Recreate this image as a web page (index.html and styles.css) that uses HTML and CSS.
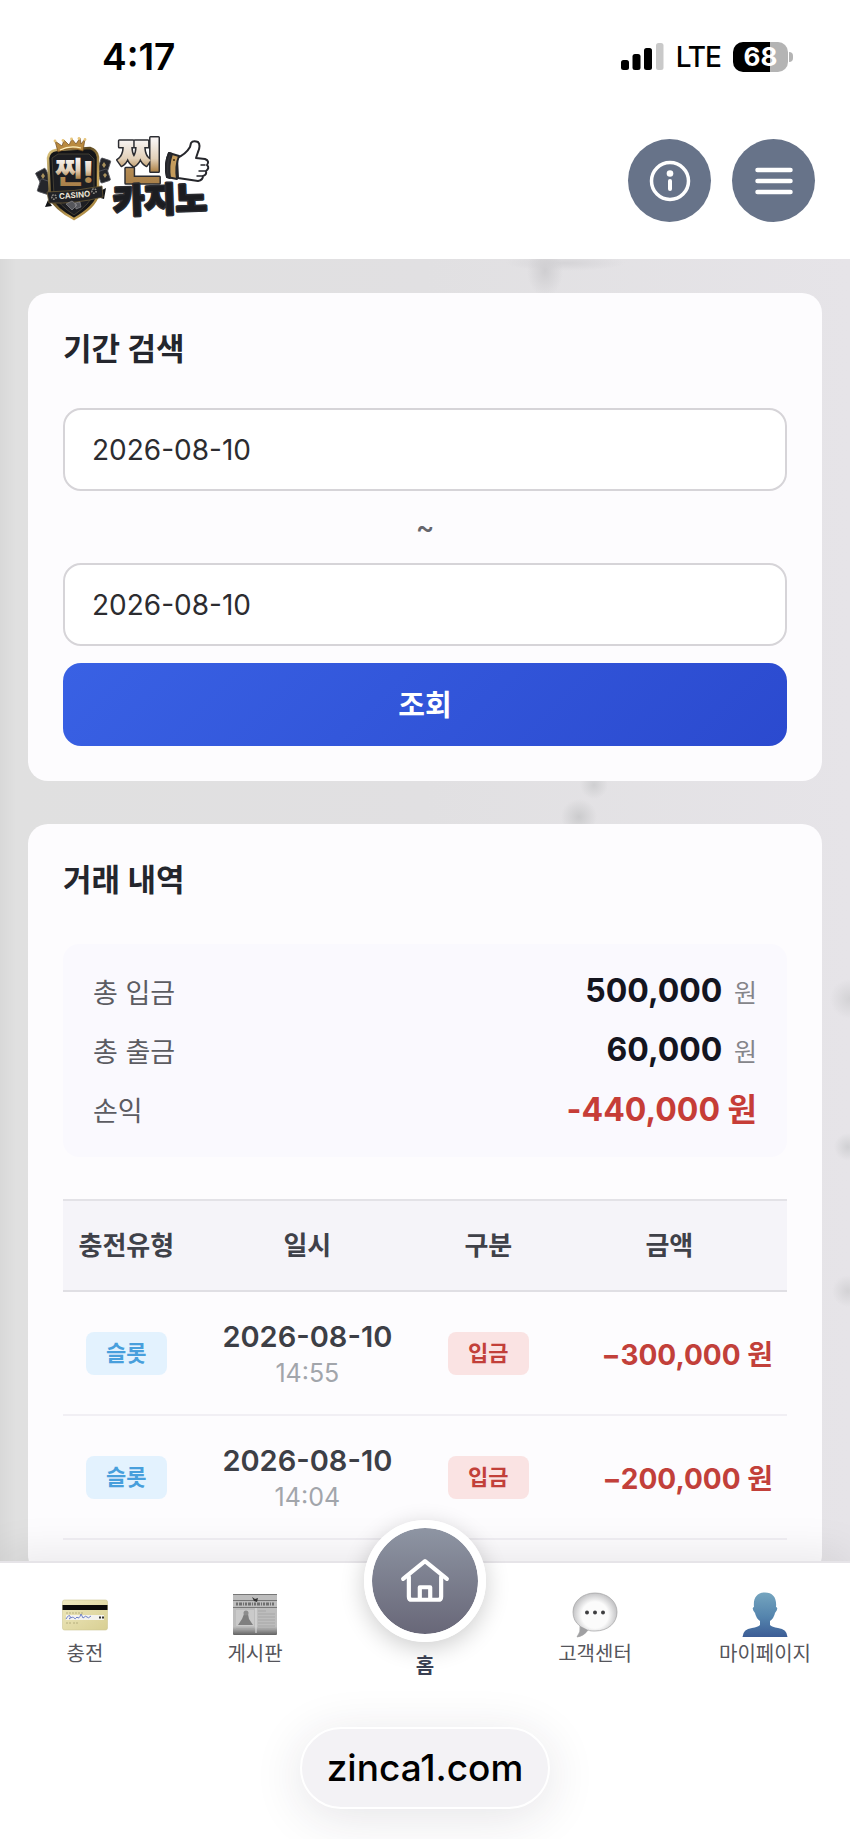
FILE: index.html
```html
<!DOCTYPE html>
<html lang="ko">
<head>
    <meta charset="UTF-8">
    <meta name="viewport" content="width=device-width, initial-scale=1.0">
    <title>찐카지노</title>
    <link rel="stylesheet" href="styles.css">
</head>
<body>

<div class="statusbar">
    <div class="clock">4:17</div>
    <div class="status-right">
        <svg class="signal" viewBox="0 0 43 28" aria-hidden="true">
            <rect x="0" y="17" width="8" height="10" rx="2.5"/>
            <rect x="11.500" y="11" width="8" height="16" rx="2.5"/>
            <rect x="23" y="5" width="8" height="22" rx="2.5"/>
            <rect class="off" x="35" y="0" width="7.500" height="27" rx="2.5"/>
        </svg>
        <span class="network">LTE</span>
        <div class="battery">
            <span class="level">68</span>
            <span class="nub"></span>
        </div>
    </div>
</div>

<header class="header">
    <a class="logo" href="#" aria-label="찐카지노">
        <svg viewBox="0 0 176 88">
            <defs>
                <linearGradient id="gold" x1="0" y1="0" x2="0" y2="1">
                    <stop offset="0.15" stop-color="#f7f2f0"/>
                    <stop offset="0.45" stop-color="#e2d0b8"/>
                    <stop offset="0.65" stop-color="#b38a52"/>
                    <stop offset="1" stop-color="#a47b45"/>
                </linearGradient>
                <linearGradient id="rim" x1="0" y1="0" x2="1" y2="1">
                    <stop offset="0" stop-color="#e8cf86"/>
                    <stop offset="0.4" stop-color="#57451f"/>
                    <stop offset="0.7" stop-color="#c9a65a"/>
                    <stop offset="1" stop-color="#8a6a2c"/>
                </linearGradient>
            </defs>
            <!-- playing cards behind the shield -->
            <g fill="#25262b" stroke="#55565c" stroke-width="0.8">
                <rect x="2" y="33" width="11" height="15" rx="1" transform="rotate(-28 7 40)"/>
                <rect x="3" y="43" width="11" height="13" rx="1" transform="rotate(18 8 49)"/>
                <rect x="63" y="22" width="10" height="15" rx="1" transform="rotate(18 68 29)"/>
                <rect x="63" y="33" width="10" height="12" rx="1" transform="rotate(-18 68 39)"/>
            </g>
            <g fill="#a8905c">
                <path d="M7 36l2 3-2 3-2-3zM68 25l2 3-2 3-2-3zM69 36l2 2-2 3-2-3z"/>
            </g>
            <!-- shield -->
            <path d="M12 21Q13 14 20 13L54 11Q61 13 62 20L62 58Q59 70 38 82Q19 72 14 60Z" fill="#141518" stroke="url(#rim)" stroke-width="2.5"/>
            <path d="M16 21L22 17H53L58 22V56Q54 67 38 78Q23 68 18 58Z" fill="#1d1e22" stroke="#4c4637" stroke-width="0.8"/>
            <!-- crown -->
            <path d="M22 15L19 4L26 9L28 3L33 8L36 2L40 7L44 1L45 7L49 2L47 14Q34 9 22 15Z" fill="#b98a40" stroke="#704b1c" stroke-width="0.7"/>
            <g fill="#e8c67d">
                <circle cx="19" cy="4" r="1.4"/><circle cx="27" cy="3.500" r="1.4"/><circle cx="35.500" cy="2" r="1.4"/><circle cx="43" cy="1.500" r="1.4"/><circle cx="49" cy="2.500" r="1.4"/>
            </g>
            <path d="M24 13Q34 8 45 11" stroke="#fff0bd" stroke-width="1.2" fill="none"/>
            <text class="logo-badge" x="19" y="46">찐!</text>
            <!-- ribbon -->
            <path d="M10 60L16 69L9 70L12 63ZM64 54L70 51L68 62L61 60Z" fill="#111215"/>
            <path d="M11 55Q38 55 66 49L67 60Q40 67 13 66Z" fill="#202125" stroke="#6c5c37" stroke-width="0.8"/>
            <text class="logo-casino" x="23" y="61" transform="rotate(-5 38 58)">CASINO</text>
            <g fill="none" stroke="#8f8c84" stroke-width="1.6" stroke-dasharray="1.5 1">
                <circle cx="18" cy="60" r="2.200"/><circle cx="58" cy="54" r="2.200"/>
            </g>
            <path d="M30 67l6-3 5 4-5 5zM39 66l5-1 1 5-5 2z" fill="#55565b" stroke="#99979a" stroke-width="0.6"/>
            <!-- wordmark -->
            <text class="logo-top" x="81" y="42">찐</text>
            <text class="logo-bottom" x="77" y="75" transform="rotate(-2 120 64)">카지노</text>
            <!-- thumb -->
            <g stroke="#25262b" stroke-width="2" stroke-linejoin="round" stroke-linecap="round">
                <path d="M141 21Q150 17 154 10L155 6Q157 3 162 5Q165 8 162 15L160 21L169 22Q174 24 171 28Q174 31 170 34Q171 38 167 39Q167 43 162 44L142 41Z" fill="#fff"/>
                <path d="M169 28H165M169 34H163M166 39H161" fill="none" stroke-width="1.4"/>
                <path d="M133 16L143 19Q139 29 141 42L131 40Q128 27 133 16Z" fill="#c59c5c"/>
                <path d="M133 16L136 17Q132 28 134 41L131 40Q128 27 133 16Z" fill="#303137"/>
            </g>
            <circle cx="138" cy="23" r="1" fill="#3c2b12"/>
        </svg>
    </a>
    <div class="header-buttons">
        <button class="round-btn" type="button" aria-label="정보">
            <svg viewBox="0 0 42 42">
                <circle cx="21" cy="21" r="18.500" fill="none" stroke="#fff" stroke-width="3.500"/>
                <circle cx="21" cy="13.500" r="3.300" fill="#fff"/>
                <path d="M21 21v8" stroke="#fff" stroke-width="4" stroke-linecap="round"/>
            </svg>
        </button>
        <button class="round-btn" type="button" aria-label="메뉴">
            <svg viewBox="0 0 42 42">
                <path d="M4.500 10h33M4.500 21h33M4.500 32h33" stroke="#fff" stroke-width="4.500" stroke-linecap="round"/>
            </svg>
        </button>
    </div>
</header>

<main class="content">
    <section class="card">
        <h2 class="card-title">기간 검색</h2>
        <form class="search">
            <input class="date-input" type="text" value="2026-08-10" aria-label="시작일">
            <span class="tilde">~</span>
            <input class="date-input" type="text" value="2026-08-10" aria-label="종료일">
            <button class="search-btn" type="button">조회</button>
        </form>
    </section>

    <section class="card">
        <h2 class="card-title">거래 내역</h2>
        <div class="summary">
            <div class="summary-row">
                <span class="summary-label">총 입금</span>
                <span class="summary-value">500,000 <span class="unit">원</span></span>
            </div>
            <div class="summary-row">
                <span class="summary-label">총 출금</span>
                <span class="summary-value">60,000 <span class="unit">원</span></span>
            </div>
            <div class="summary-row">
                <span class="summary-label">손익</span>
                <span class="summary-value loss">-440,000 원</span>
            </div>
        </div>

        <table class="history">
            <thead>
                <tr>
                    <th class="col-type">충전유형</th>
                    <th class="col-date">일시</th>
                    <th class="col-kind">구분</th>
                    <th class="col-amount">금액</th>
                </tr>
            </thead>
            <tbody>
                <tr>
                    <td><span class="tag slot">슬롯</span></td>
                    <td><div class="date">2026-08-10</div><div class="time">14:55</div></td>
                    <td><span class="tag deposit">입금</span></td>
                    <td class="amount">−300,000 원</td>
                </tr>
                <tr>
                    <td><span class="tag slot">슬롯</span></td>
                    <td><div class="date">2026-08-10</div><div class="time">14:04</div></td>
                    <td><span class="tag deposit">입금</span></td>
                    <td class="amount">−200,000 원</td>
                </tr>
            </tbody>
        </table>
    </section>
</main>

<footer class="bottom">
    <nav class="tabs">
        <a class="tab" href="#">
            <svg class="tab-icon" viewBox="0 0 46 46">
                <defs>
                    <linearGradient id="cardbg" x1="0" y1="0" x2="1" y2="1">
                        <stop offset="0" stop-color="#efe9bf"/>
                        <stop offset="1" stop-color="#d8cf93"/>
                    </linearGradient>
                </defs>
                <rect x="0.500" y="8" width="45" height="30" rx="2" fill="url(#cardbg)" stroke="#cfc793" stroke-width="0.6"/>
                <rect x="0.500" y="13" width="45" height="5" fill="#0b0a08"/>
                <rect x="4" y="23" width="38" height="5" fill="#f4f3ee"/>
                <path d="M4 27q3-5 4-3t-1 3q4-3 5-1t3-1q2 3 4-3l2 4q3-3 4-1t4-1" fill="none" stroke="#6d7fc8" stroke-width="1"/>
                <path d="M37 25.500h5" stroke="#333" stroke-width="2" stroke-dasharray="2 1"/>
                <path d="M4 21h17M4 31h5M11 31h6" stroke="#a9a374" stroke-width="0.8" stroke-dasharray="2 1"/>
            </svg>
            <span>충전</span>
        </a>
        <a class="tab" href="#">
            <svg class="tab-icon" viewBox="0 0 46 46">
                <defs>
                    <linearGradient id="paper" x1="0" y1="0" x2="0" y2="1">
                        <stop offset="0.8" stop-color="#bdbdbd"/>
                        <stop offset="1" stop-color="#626262"/>
                    </linearGradient>
                </defs>
                <rect x="1" y="2" width="44" height="41" rx="1" fill="url(#paper)"/>
                <path d="M1 2.500h44M1 8.500h44M1 15.500h44" stroke="#777" stroke-width="1.2"/>
                <path d="M4 12h38" stroke="#707070" stroke-width="3" stroke-dasharray="2 1 3 1 1 1"/>
                <path d="M20 5l3 2 3-1-1 4-3-1z" fill="#333"/>
                <rect x="4" y="18" width="18" height="16" fill="#cacaca"/>
                <path d="M6 33l4-6 2-5h4l1 5 4 6z" fill="#7f7f7f"/>
                <circle cx="14" cy="21" r="2.500" fill="#8d8d8d"/>
                <path d="M24 16v25" stroke="#e2e2e2"/>
                <path d="M26 19h8M26 22h17M26 25h17M26 28h17M26 31h17M26 34h17M4 37h18M26 37h17" stroke="#a2a2a2" stroke-width="0.8"/>
            </svg>
            <span>게시판</span>
        </a>
        <a class="tab home" href="#">
            <span class="home-circle">
                <svg viewBox="0 0 48 48" fill="none" stroke="#fff" stroke-width="4" stroke-linecap="round" stroke-linejoin="round">
                    <path d="M3 22L24 5L45 22"/>
                    <path d="M8.500 20V39Q8.500 42 11.500 42H36.500Q39.500 42 39.500 39V20"/>
                    <path d="M19 41V30H29V41"/>
                </svg>
            </span>
            <span>홈</span>
        </a>
        <a class="tab" href="#">
            <svg class="tab-icon" viewBox="0 0 46 46">
                <defs>
                    <radialGradient id="bubble">
                        <stop offset="0.6" stop-color="#fbfbfb"/>
                        <stop offset="1" stop-color="#c4c4c6"/>
                    </radialGradient>
                </defs>
                <path d="M23 1C35 1 45 9 45 20S36 39 23 39C20 39 18 39 16 38Q12 44 5 45Q9 40 8 34Q1 29 1 20C1 9 11 1 23 1Z" fill="url(#bubble)" stroke="#a9a9ab" stroke-width="0.8"/>
                <path d="M5 45Q9 40 8 34L16 38Q12 44 5 45Z" fill="#a0a0a2"/>
                <g fill="#3e3e40"><circle cx="15" cy="20.500" r="2"/><circle cx="23" cy="20.500" r="2"/><circle cx="31" cy="20.500" r="2"/></g>
            </svg>
            <span>고객센터</span>
        </a>
        <a class="tab" href="#">
            <svg class="tab-icon" viewBox="0 0 46 46">
                <defs>
                    <linearGradient id="person" x1="0" y1="0" x2="0" y2="1">
                        <stop offset="0" stop-color="#75a5bf"/>
                        <stop offset="0.55" stop-color="#5484ad"/>
                        <stop offset="1" stop-color="#3c5d96"/>
                    </linearGradient>
                </defs>
                <path d="M23 0.500C31 0.500 35 6 34 15Q37 16 33 21Q32 26 28 29V33Q30 35 36 36Q45 37 45.500 45H0.500Q1 37 10 36Q16 35 18 33V29Q14 26 13 21Q9 16 12 15C11 6 15 0.500 23 0.500Z" fill="url(#person)"/>
            </svg>
            <span>마이페이지</span>
        </a>
    </nav>
    <div class="address">zinca1.com</div>
</footer>

</body>
</html>
```
FILE: styles.css
```css
* {
    box-sizing: border-box;
}

body {
    margin: 0;
    height: 100vh;
    display: flex;
    flex-direction: column;
    overflow: hidden;
    background-color: #fff;
    font-family: Inter, "Noto Sans CJK KR", sans-serif;
    color: #24262d;
}

button, input {
    font-family: inherit;
}

a {
    color: inherit;
    text-decoration: none;
}

/* Status bar */
.statusbar {
    flex: none;
    height: 113px;
    padding: 0 57px 0 102px;
    display: flex;
    justify-content: space-between;
    align-items: center;
    color: #000;
}

.clock {
    font-size: 37px;
    font-weight: 600;
}

.status-right {
    display: flex;
    align-items: center;
    gap: 12px;
}

.signal {
    width: 43px;
    height: 28px;
}

.signal .off {
    fill: #c9c9c9;
}

.network {
    font-size: 28px;
    font-weight: 500;
    letter-spacing: -1px;
}

.battery {
    display: flex;
    align-items: center;
    gap: 1px;
}

.level {
    width: 55px;
    height: 30px;
    border-radius: 10px;
    background: linear-gradient(90deg, #000 68%, #b4b4b4 68%);
    color: #fff;
    font-size: 26px;
    font-weight: 700;
    line-height: 30px;
    text-align: center;
}

.nub {
    width: 4px;
    height: 10px;
    border-radius: 0 5px 5px 0;
    background-color: #b4b4b4;
}

/* Header */
.header {
    flex: none;
    height: 146px;
    padding: 0 35px 11px 36px;
    display: flex;
    justify-content: space-between;
    align-items: center;
}

.logo svg {
    display: block;
    width: 176px;
    height: 88px;
    overflow: visible;
}

.logo-badge {
    font-size: 30px;
    font-weight: 900;
    fill: url(#gold);
}

.logo-casino {
    font-size: 8px;
    font-weight: 700;
    fill: #e8e2d4;
}

.logo-top, .logo-bottom {
    font-weight: 900;
    stroke: #2b2c31;
    stroke-width: 3px;
    stroke-linejoin: round;
    paint-order: stroke;
}

.logo-top {
    font-size: 49px;
    fill: url(#gold);
}

.logo-bottom {
    font-size: 34px;
    fill: #1c1d21;
}

.header-buttons {
    display: flex;
    gap: 21px;
}

.round-btn {
    width: 83px;
    height: 83px;
    padding: 0;
    display: flex;
    justify-content: center;
    align-items: center;
    border: none;
    border-radius: 50%;
    background-color: #677389;
}

.round-btn svg {
    width: 42px;
    height: 42px;
}

/* Content, on a pale marble ground */
.content {
    flex: 1;
    min-height: 0;
    overflow-y: auto;
    scrollbar-width: none;
    padding: 34px 28px;
    display: flex;
    flex-direction: column;
    gap: 43px;
    background:
        radial-gradient(ellipse 18px 26px at 545px 12px, #cfced1 0, transparent),
        radial-gradient(ellipse 60px 8px at 565px 4px, #d5d4d7 0, transparent),
        radial-gradient(circle at 594px 526px, #cfcfd1 0, transparent 14px),
        radial-gradient(circle at 579px 558px, #cbcbcd 0, transparent 18px),
        radial-gradient(circle at 850px 740px, #d3d2d5 0, transparent 20px),
        radial-gradient(circle at 848px 888px, #d0d0d3 0, transparent 14px),
        radial-gradient(circle at 848px 1032px, #d3d2d5 0, transparent 16px),
        linear-gradient(90deg, #d8d8d8 0, #e0e0e0 16px, #e1e0e2 50%, #e6e4e8 100%);
}

.card {
    flex: none;
    padding: 35px;
    border-radius: 20px;
    background-color: #fdfcfe;
}

.card-title {
    margin: 0 0 38px;
    font-size: 31px;
    font-weight: 700;
    line-height: 42px;
}

.search {
    display: flex;
    flex-direction: column;
}

.date-input {
    width: 100%;
    height: 83px;
    padding: 0 27px;
    border: 2px solid #d6d4d8;
    border-radius: 18px;
    background-color: #fff;
    color: #2c2c30;
    font-size: 28px;
}

.tilde {
    height: 72px;
    line-height: 72px;
    text-align: center;
    font-size: 28px;
    font-weight: 500;
    color: #66666c;
}

.search-btn {
    height: 83px;
    margin-top: 17px;
    padding: 0 0 3px;
    border: none;
    border-radius: 18px;
    background: linear-gradient(135deg, #3961e4, #2b4acf);
    color: #fff;
    font-size: 29px;
    font-weight: 700;
}

.summary {
    margin: 43px 0 42px;
    padding: 18px 30px;
    border-radius: 16px;
    background-color: #faf9fe;
}

.summary-row {
    display: flex;
    justify-content: space-between;
    align-items: center;
    height: 59px;
}

.summary-label {
    font-size: 27px;
    color: #5c5c62;
}

.summary-value {
    font-size: 32px;
    font-weight: 700;
    line-height: 59px;
    color: #14151f;
}

.unit {
    margin-left: 4px;
    font-size: 25px;
    font-weight: 400;
    color: #85858a;
}

.loss {
    color: #c63d37;
}

/* History table */
.history {
    width: 100%;
    table-layout: fixed;
    border-collapse: separate;
    border-spacing: 0;
}

.history th {
    padding: 26px 0;
    border-top: 2px solid #e3e2e7;
    border-bottom: 2px solid #e0dfe4;
    background-color: #f5f4f9;
    font-size: 26px;
    font-weight: 700;
    line-height: 37px;
    color: #3f4149;
}

.col-type, .col-kind {
    width: 17.5%;
}

.history td {
    padding: 22px 0;
    border-bottom: 2px solid #f1eff4;
    text-align: center;
}

.date {
    padding-top: 4px;
    font-size: 29px;
    font-weight: 600;
    line-height: 37px;
    color: #3d3f46;
}

.time {
    font-size: 25px;
    line-height: 37px;
    color: #a2a5ab;
}

.tag {
    display: inline-block;
    padding: 0 20px;
    border-radius: 8px;
    font-size: 22px;
    font-weight: 700;
    line-height: 43px;
}

.slot {
    background-color: #e3f2fe;
    color: #489fdc;
}

.deposit {
    background-color: #fae3e3;
    color: #c2403a;
}

.history .amount {
    padding-right: 14px;
    text-align: right;
    font-size: 28px;
    font-weight: 700;
    white-space: nowrap;
    color: #c2403a;
}

/* Bottom bar */
.bottom {
    flex: none;
    position: relative;
    height: 278px;
    border-top: 2px solid #e6e4e8;
    background-color: #fff;
    box-shadow: 0 -8px 40px rgba(0, 0, 0, 0.08);
    display: flex;
    flex-direction: column;
    align-items: center;
}

.tabs {
    width: 100%;
    height: 164px;
    display: flex;
}

.tab {
    flex: 1;
    padding-top: 29px;
    display: flex;
    flex-direction: column;
    align-items: center;
    font-size: 20px;
    line-height: 32px;
    color: #55555b;
}

.tab-icon {
    width: 46px;
    height: 46px;
}

/* The home button stands over the bar's top edge */
.home {
    margin-top: -43px;
    padding-top: 0;
    font-weight: 700;
    color: #3a4052;
}

.home-circle {
    width: 122px;
    height: 122px;
    margin-bottom: 8px;
    display: flex;
    justify-content: center;
    align-items: center;
    border: 8px solid #fff;
    border-radius: 50%;
    background: linear-gradient(#8e95a3, #686778) padding-box;
    box-shadow: 0 6px 24px rgba(0, 0, 0, 0.2);
}

.home-circle svg {
    width: 50px;
    height: 50px;
}

.address {
    height: 82px;
    padding: 0 25px;
    border: 2px solid #fff;
    border-radius: 41px;
    background-color: #f3f2f5;
    box-shadow: 0 8px 50px rgba(40, 30, 60, 0.12);
    color: #000;
    font-size: 37px;
    font-weight: 500;
    line-height: 78px;
}
```
